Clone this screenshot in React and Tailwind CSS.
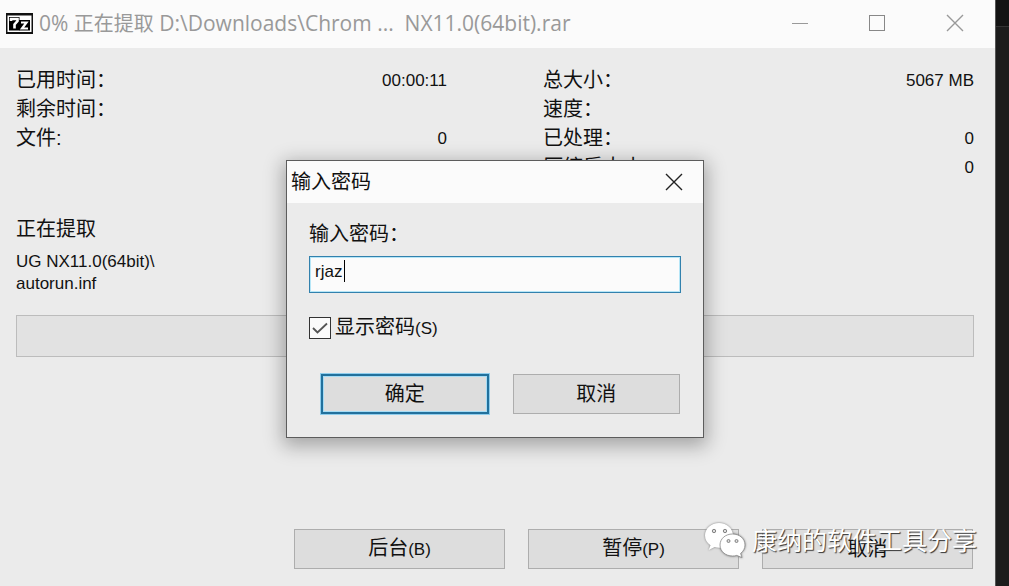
import { useState } from 'react';
import clsx from 'clsx';

function Latin({ children }) {
  return <span className="text-[17px]">{children}</span>;
}

function StatRow({ label, value }) {
  return (
    <div className="flex items-center justify-between">
      <dt>{label}</dt>
      <dd className="text-[17px]">{value}</dd>
    </div>
  );
}

function PushButton({ primary, className, children, ...props }) {
  return (
    <button
      type="button"
      className={clsx(
        'flex h-10 items-center justify-center bg-[#dddddd]',
        primary
          ? 'border-2 border-[#22709c] shadow-[0_0_0_1px_#8fcdec,inset_0_0_0_1px_#a5dcf5]'
          : 'border border-[#adadad]',
        className
      )}
      {...props}
    >
      <span>{children}</span>
    </button>
  );
}

function CloseIcon() {
  return (
    <svg width="18" height="18" viewBox="0 0 18 18" fill="none" stroke="currentColor" strokeWidth="1.4" aria-hidden="true">
      <path d="M1 1 17 17M17 1 1 17" />
    </svg>
  );
}

function AppIcon() {
  return (
    <svg width="27" height="21" viewBox="0 0 27 21" aria-hidden="true">
      <rect width="27" height="21" fill="#111" />
      <rect x="1.500" y="2.500" width="24" height="16.500" fill="#fff" />
      <rect x="3" y="4" width="10.500" height="13.500" fill="#000" />
      <rect x="13" y="7" width="11" height="10.500" fill="#000" />
      <path d="M5 8V6H11.500V8L8.500 11.500V15.500" fill="none" stroke="#fff" strokeWidth="2.600" />
      <path d="M15 9.500H20.500L16 15.500H22" fill="none" stroke="#fff" strokeWidth="2.200" />
    </svg>
  );
}

function ChatIcon() {
  return (
    <svg width="42" height="36" viewBox="0 0 42 36" className="drop-shadow-[0_0_1px_#777]" aria-hidden="true">
      <path
        d="M15 0C7 0 1 5.600 1 12.500c0 4 2 7.400 5.500 9.800L4.700 27l6-2.900c1.400.4 2.800.6 4.300.6 8 0 14-5.400 14-12.200S23 0 15 0Z"
        fill="#fff"
      />
      <path
        d="M28.500 11c-7 0-12.500 4.700-12.500 11s5.500 11 12.500 11c1.500 0 3-.2 4.300-.6l5.200 2.200-1.400-4.200c2.700-2 4.400-5 4.400-8.400 0-6.300-5.500-11-12.500-11Z"
        fill="#fff"
        stroke="#888"
        strokeWidth=".8"
      />
      <g fill="#ddd" stroke="#777" strokeWidth=".9">
        <circle cx="10" cy="8" r="1.700" />
        <circle cx="21" cy="8" r="1.700" />
        <circle cx="24.500" cy="18" r="1.500" />
        <circle cx="32.500" cy="18" r="1.500" />
      </g>
    </svg>
  );
}

function PasswordDialog() {
  const [password, setPassword] = useState('rjaz');
  const [visible, setVisible] = useState(true);

  return (
    <section
      role="dialog"
      aria-labelledby="dialog-title"
      className="absolute top-40 left-[286px] w-[418px] border border-[#5c5c5c] bg-[#ebebeb] shadow-[0_5px_18px_3px_rgba(0,0,0,0.3)]"
    >
      <header className="flex h-[42px] items-center justify-between bg-[#fbfbfb] pr-5 pl-1">
        <h2 id="dialog-title">输入密码</h2>
        <button type="button" aria-label="关闭" className="text-[#222]">
          <CloseIcon />
        </button>
      </header>
      <form className="px-[22px] pt-[17px] pb-[23px]" onSubmit={(e) => e.preventDefault()}>
        <label htmlFor="password" className="block leading-[29px]">输入密码：</label>
        <div className="relative mt-[7px]">
          <input
            id="password"
            type={visible ? 'text' : 'password'}
            value={password}
            onChange={(e) => setPassword(e.target.value)}
            className="block h-[37px] w-full border border-[#3281ad] bg-[#fbfbfb] px-[5px] pb-[6px] text-[17px] caret-transparent shadow-[inset_0_0_0_1px_#b6e6f7] outline-none"
          />
          <span className="absolute top-1 left-[35px] h-[22px] w-px bg-black" />
        </div>
        <label className="mt-5 flex items-center gap-1 leading-[29px]">
          <span className="relative flex">
            <input
              type="checkbox"
              checked={visible}
              onChange={(e) => setVisible(e.target.checked)}
              className="size-[22px] appearance-none border border-[#333] bg-[#fbfbfb]"
            />
            {visible && (
              <svg viewBox="0 0 22 22" className="pointer-events-none absolute inset-0 size-[22px]" fill="none" stroke="#555" strokeWidth="1.8" aria-hidden="true">
                <path d="m4 11 4.500 4.500L18 6.500" />
              </svg>
            )}
          </span>
          <span>显示密码<Latin>(S)</Latin></span>
        </label>
        <div className="mt-[31px] grid grid-cols-2 gap-6 pr-px pl-3">
          <PushButton primary>确定</PushButton>
          <PushButton>取消</PushButton>
        </div>
      </form>
    </section>
  );
}

export default function App() {
  return (
    <div className="relative flex min-h-screen bg-[#1c1c1c] font-['Liberation_Sans','Noto_Sans_CJK_SC',sans-serif] text-xl leading-[29px] text-[#111]">
      <main className="flex flex-1 flex-col bg-[#ebebeb]">
        <header className="flex h-12 items-center justify-between bg-[#fbfbfb] pr-[31px] pb-[2px] pl-[6px] text-[#999]">
          <div className="flex items-center gap-[6px]">
            <AppIcon />
            <h1 className="font-['Open_Sans','Noto_Sans_CJK_SC',sans-serif] text-[21px] whitespace-pre">
              0% <span className="text-xl">正在提取</span> D:\Downloads\Chrom ...  NX11.0(64bit).rar
            </h1>
          </div>
          <div className="flex items-center gap-[61px]">
            <button type="button" aria-label="最小化" className="h-[18px] w-4">
              <span className="block h-px bg-[#999]" />
            </button>
            <button type="button" aria-label="最大化" className="size-4 border border-[#888]" />
            <button type="button" aria-label="关闭">
              <CloseIcon />
            </button>
          </div>
        </header>

        <div className="flex flex-1 flex-col pt-[18px] pr-[21px] pb-[17px] pl-4">
          <div className="grid grid-cols-2 gap-24">
            <dl>
              <StatRow label="已用时间：" value="00:00:11" />
              <StatRow label="剩余时间：" />
              <StatRow label="文件:" value="0" />
            </dl>
            <dl>
              <StatRow label="总大小：" value="5067 MB" />
              <StatRow label="速度：" />
              <StatRow label="已处理：" value="0" />
              <StatRow label="压缩后大小：" value="0" />
            </dl>
          </div>

          <p className="mt-[33px]">正在提取</p>
          <p className="mt-[7px] text-[17px] leading-[22px]">
            UG NX11.0(64bit)\
            <br />
            autorun.inf
          </p>
          <div role="progressbar" aria-label="正在提取" aria-valuenow={0} className="mt-5 h-[42px] border border-[#bcbcbc] bg-[#e2e2e2]" />

          <div className="mt-auto flex justify-end gap-[23px] pr-px">
            <PushButton className="w-[211px]">后台<Latin>(B)</Latin></PushButton>
            <PushButton className="w-[211px]">暂停<Latin>(P)</Latin></PushButton>
            <PushButton className="w-[211px]">取消</PushButton>
          </div>
        </div>
      </main>

      <aside className="w-[14px] border-l border-[#555]">
        <div className="h-[27px] border-b border-[#333] bg-[#131313]" />
      </aside>

      <PasswordDialog />

      <div className="pointer-events-none absolute right-8 bottom-[27px] flex items-center gap-[6px] text-[25px] leading-[36px] text-white">
        <ChatIcon />
        <span className="[text-shadow:1px_1px_1px_#333]">康纳的软件工具分享</span>
      </div>
    </div>
  );
}
